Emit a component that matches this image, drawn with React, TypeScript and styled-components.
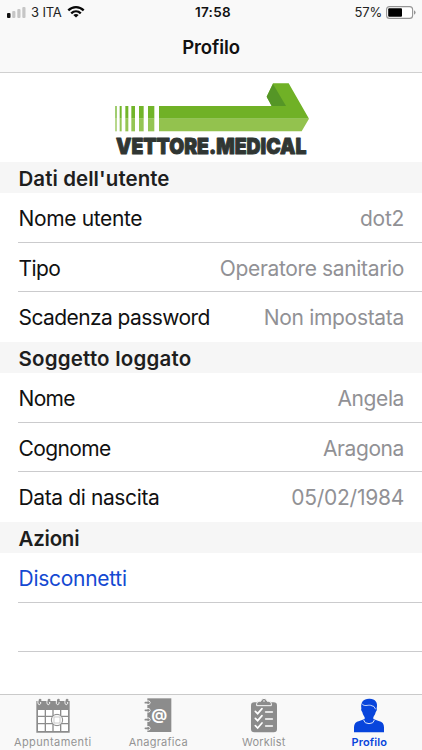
import React from 'react';
import styled, { createGlobalStyle } from 'styled-components';

const GlobalStyle = createGlobalStyle`
  * { box-sizing: border-box; }
  body { margin: 0; background: #fff; font-family: Inter, 'Liberation Sans', sans-serif; }
`;

const Screen = styled.div`
  display: flex;
  flex-direction: column;
  width: 422px;
  height: 750px;
  overflow: hidden;
  background: #fff;
  color: #111;
`;

const TopBar = styled.header`
  height: 73px;
  background: #f9f9f9;
  border-bottom: 1px solid #d0d0d0;
`;

const StatusBar = styled.div`
  display: grid;
  grid-template-columns: 1fr auto 1fr;
  align-items: center;
  height: 24px;
  padding: 0 6px 0 7px;
  font-size: 13px;
  line-height: 24px;
`;

const StatusGroup = styled.div<{ $end?: boolean }>`
  display: flex;
  align-items: center;
  justify-content: ${(p) => (p.$end ? 'flex-end' : 'flex-start')};
  gap: ${(p) => (p.$end ? 4 : 5)}px;
`;

const StatusText = styled.span<{ $tracking?: number }>`
  color: #222;
  letter-spacing: ${(p) => p.$tracking ?? 0}px;
`;

const Clock = styled.span`
  font-weight: 600;
  font-size: 13.5px;
  letter-spacing: 0.35px;
  padding-left: 3px;
`;

const Title = styled.h1`
  margin: 0;
  height: 48px;
  font-size: 18.5px;
  line-height: 47px;
  font-weight: 600;
  letter-spacing: -0.1px;
  text-align: center;
`;

const Brand = styled.div`
  display: flex;
  justify-content: center;
  height: 89px;
  padding-top: 3px;
`;

const Section = styled.section<{ $rows: string }>`
  display: grid;
  grid-template-rows: 31px ${(p) => p.$rows};
`;

const SectionTitle = styled.h2<{ $tracking: number }>`
  margin: 0;
  padding-left: 18.5px;
  background: #f6f6f6;
  color: #1e1e1e;
  font-size: 20.5px;
  line-height: 33px;
  height: 31px;
  font-weight: 600;
  letter-spacing: ${(p) => p.$tracking}px;
`;

const Row = styled.div<{ $line: boolean }>`
  display: flex;
  align-items: center;
  justify-content: space-between;
  margin-left: 18px;
  padding: ${(p) => (p.$line ? 3 : 1)}px 18px 0 0.5px;
  border-bottom: ${(p) => (p.$line ? '1px solid #cbcbcd' : '0')};
  font-size: 21px;
  line-height: 28px;
`;

const Label = styled.span<{ $tracking: number }>`
  letter-spacing: ${(p) => p.$tracking}px;
`;

const Value = styled(Label)`
  color: #919195;
`;

const Action = styled.button`
  padding: 0;
  border: 0;
  background: none;
  color: #1449d2;
  font: inherit;
  letter-spacing: -0.28px;
`;

const TabBar = styled.nav`
  display: grid;
  grid-template-columns: repeat(4, 1fr);
  height: 56px;
  margin-top: auto;
  border-top: 1px solid #cacaca;
  background: #f9f9f9;
`;

const Tab = styled.div<{ $active?: boolean; $tracking: number }>`
  display: flex;
  flex-direction: column;
  align-items: center;
  padding-top: 3px;
  color: ${(p) => (p.$active ? '#0845dc' : '#8c8c8c')};
  font-size: 11px;
  line-height: 14px;
  font-weight: ${(p) => (p.$active ? 600 : 400)};
  letter-spacing: ${(p) => p.$tracking}px;

  svg { display: block; margin-bottom: 2px; }
`;

const TabText = styled.span<{ $active?: boolean }>`
  color: ${(p) => (p.$active ? '#0845dc' : '#949494')};
`;

const SignalIcon = () => (
  <svg width="19" height="12" viewBox="0 0 19 12">
    <rect x="0" y="7" width="3.5" height="5" rx="1" fill="#111" />
    <rect x="5.2" y="5" width="3.2" height="7" rx="1" fill="#c6c6c6" />
    <rect x="10.3" y="3" width="3.2" height="9" rx="1" fill="#c6c6c6" />
    <rect x="15.3" y="1" width="3.2" height="11" rx="1" fill="#c6c6c6" />
  </svg>
);

const WifiIcon = () => (
  <svg width="18" height="12" viewBox="0 0 18 12" fill="none" stroke="#080808" strokeWidth="2.3">
    <path d="M1.3 4.4C5.7 .1 12.3 .1 16.7 4.4" />
    <path d="M4.2 7.4C7 4.7 11 4.7 13.8 7.4" />
    <path d="M6.3 9Q9 7.1 11.7 9L9 11.6Z" fill="#080808" stroke="none" />
  </svg>
);

const BatteryIcon = () => (
  <svg width="30" height="13" viewBox="0 0 30 13">
    <rect x=".6" y=".6" width="26" height="11.8" rx="3" fill="#fff" stroke="#949494" strokeWidth="1.1" />
    <rect x="2.2" y="2.2" width="13.8" height="8.6" rx="1" fill="#000" />
    <path d="M28 4.3Q29.6 5 29.6 6.5T28 8.7Z" fill="#949494" />
  </svg>
);

const stripes = [
  [31, 4],
  [44, 6],
  [61, 9],
  [79, 11],
  [102, 14],
  [129, 19],
];

const Logo = () => (
  <svg width="212" height="84" viewBox="0 0 636 252" overflow="visible">
    {stripes.map(([x, w]) => (
      <g key={x}>
        <rect x={x} y="90" width={w} height="38" fill="#72b52a" />
        <rect x={x} y="128" width={w} height="38" fill="#95c554" />
      </g>
    ))}
    <path d="M162 90H500L485 62L504 22H551L612 128H162Z" fill="#70b126" />
    <path d="M162 128H612L590 166H162Z" fill="#93c24e" />
    <path d="M504 24L543 90H500L485 62Z" fill="#559626" />
    <text
      x="33"
      y="233"
      textLength="571"
      lengthAdjust="spacingAndGlyphs"
      fontFamily="Inter, sans-serif"
      fontSize="66"
      fontWeight="900"
      fill="#303633"
      stroke="#303633"
      strokeWidth="3"
      strokeLinejoin="round"
    >
      VETTORE.MEDICAL
    </text>
  </svg>
);

const CalendarIcon = () => (
  <svg width="34" height="35" viewBox="0 0 102 105">
    <path fill="currentColor" d="M1 9H101V104H1Z" />
    <path
      fill="#fff"
      d="M6 36H26V53H6ZM30 36H49V53H30ZM53 36H72V53H53ZM76 36H96V53H76ZM6 57H26V75H6ZM30 57H49V75H30ZM53 57H72V75H53ZM76 57H96V75H76ZM6 79H26V99H6ZM30 79H49V99H30ZM53 79H72V99H53ZM76 79H96V99H76Z"
    />
    <circle cx="63" cy="66" r="17" fill="#f9f9f9" stroke="currentColor" strokeWidth="3" />
    <rect x="54" y="57" width="18" height="18" fill="#fff" stroke="#b5b5b5" strokeWidth="2" />
    {[10, 37, 65, 91].map((x) => (
      <g key={x} fill="none">
        <path d={`M${x - 4} 8V17Q${x} 23 ${x + 4} 17V12`} stroke="#f9f9f9" strokeWidth="3" />
        <path d={`M${x} 16V7Q${x} 3 ${x + 4} 5V12`} stroke="currentColor" strokeWidth="4" />
      </g>
    ))}
  </svg>
);

const BookIcon = () => (
  <svg width="28" height="35" viewBox="0 0 84 105">
    <path d="M10 1H82V102H10Z" fill="currentColor" />
    {[14, 37, 65, 91].map((y) => (
      <g key={y} fill="none" strokeLinecap="round">
        <path d={`M9 ${y - 5}H16Q21 ${y} 16 ${y + 5}H9`} stroke="#f9f9f9" strokeWidth="3" />
        <path d={`M4 ${y}H14`} stroke="currentColor" strokeWidth="5" />
      </g>
    ))}
    <text x="46" y="65" textAnchor="middle" fontFamily="Inter, sans-serif" fontSize="47" fontWeight="700" fill="#fff" letterSpacing="0">
      @
    </text>
  </svg>
);

const ClipboardIcon = () => (
  <svg width="28" height="35" viewBox="0 0 84 105">
    <rect x="3" y="13" width="78" height="90" rx="10" fill="currentColor" />
    <path
      d="M20 23V17Q20 10 29 10H32Q35 1 42 1T52 10H55Q64 10 64 17V23Z"
      fill="currentColor"
      stroke="#f9f9f9"
      strokeWidth="3"
    />
    <circle cx="42" cy="9" r="2.5" fill="#f9f9f9" />
    <path
      d="M16 40L23 47L36 32M16 61L23 68L36 53M16 83L23 90L36 75M47 42H67M47 63H67M47 84H67"
      fill="none"
      stroke="#fff"
      strokeWidth="5"
      strokeLinecap="round"
    />
  </svg>
);

const PersonIcon = () => (
  <svg width="32" height="35" viewBox="0 0 96 105">
    <path
      d="M3 103V88Q3 72 19 69L35 63V55H61V63L77 69Q93 72 93 88V103Z"
      fill="currentColor"
    />
    <path
      d="M25 31C22 13 31 2 48 2C66 1 76 13 71 31Q74 37 68 43C64 57 56 63 48 63C39 63 32 57 28 43Q22 37 25 31Z"
      fill="currentColor"
    />
    <path d="M27 17C33 27 44 20 53 22Q65 23 68 34" fill="none" stroke="#e4ebfc" strokeWidth="2.6" />
    <path d="M32 66Q34 77 48 77T64 66" fill="none" stroke="#dce6fb" strokeWidth="3" />
  </svg>
);

type Field = { label: string; value: string; lt: number; vt: number };

const userFields: Field[] = [
  { label: 'Nome utente', value: 'dot2', lt: -0.35, vt: -0.3 },
  { label: 'Tipo', value: 'Operatore sanitario', lt: -0.55, vt: -0.35 },
  { label: 'Scadenza password', value: 'Non impostata', lt: -0.58, vt: -0.3 },
];

const subjectFields: Field[] = [
  { label: 'Nome', value: 'Angela', lt: -0.65, vt: -0.4 },
  { label: 'Cognome', value: 'Aragona', lt: -0.6, vt: -0.4 },
  { label: 'Data di nascita', value: '05/02/1984', lt: -0.38, vt: -0.25 },
];

const FieldSection = ({ title, tracking, fields }: { title: string; tracking: number; fields: Field[] }) => (
  <Section $rows="50px 49px 50px">
    <SectionTitle $tracking={tracking}>{title}</SectionTitle>
    {fields.map((f, i) => (
      <Row key={f.label} $line={i < fields.length - 1}>
        <Label $tracking={f.lt}>{f.label}</Label>
        <Value $tracking={f.vt}>{f.value}</Value>
      </Row>
    ))}
  </Section>
);

export default function App() {
  return (
    <Screen>
      <GlobalStyle />
      <TopBar>
        <StatusBar>
          <StatusGroup>
            <SignalIcon />
            <StatusText $tracking={-0.15}>3 ITA</StatusText>
            <WifiIcon />
          </StatusGroup>
          <Clock>17:58</Clock>
          <StatusGroup $end>
            <StatusText $tracking={-0.15}>57%</StatusText>
            <BatteryIcon />
          </StatusGroup>
        </StatusBar>
        <Title>Profilo</Title>
      </TopBar>
      <Brand>
        <Logo />
      </Brand>
      <FieldSection title="Dati dell'utente" tracking={0.06} fields={userFields} />
      <FieldSection title="Soggetto loggato" tracking={0.2} fields={subjectFields} />
      <Section $rows="50px 49px">
        <SectionTitle $tracking={-0.25}>Azioni</SectionTitle>
        <Row $line>
          <Action>Disconnetti</Action>
        </Row>
        <Row $line />
      </Section>
      <TabBar>
        <Tab $tracking={0.42}>
          <CalendarIcon />
          <TabText>Appuntamenti</TabText>
        </Tab>
        <Tab $tracking={0.25}>
          <BookIcon />
          <TabText>Anagrafica</TabText>
        </Tab>
        <Tab $tracking={0.22}>
          <ClipboardIcon />
          <TabText>Worklist</TabText>
        </Tab>
        <Tab $active $tracking={0.12}>
          <PersonIcon />
          <TabText $active>Profilo</TabText>
        </Tab>
      </TabBar>
    </Screen>
  );
}
